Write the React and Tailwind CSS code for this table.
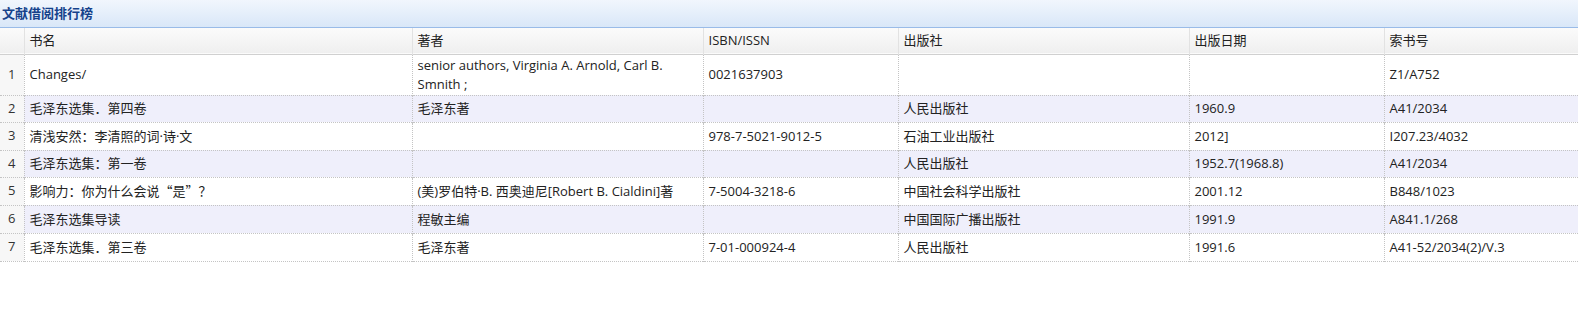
import React from 'react';

const columns = [
  { key: 'title', label: '书名', width: 'w-[388px]' },
  { key: 'author', label: '著者', width: 'w-[291px]' },
  { key: 'isbn', label: 'ISBN/ISSN', width: 'w-[195px]' },
  { key: 'publisher', label: '出版社', width: 'w-[291px]' },
  { key: 'date', label: '出版日期', width: 'w-[195px]' },
  { key: 'callno', label: '索书号', width: 'w-[194px]' },
];

const cjk = (s) => <span className="font-['Noto_Sans_CJK_SC',sans-serif]">{s}</span>;

const rows = [
  {
    title: 'Changes/',
    author: 'senior authors, Virginia A. Arnold, Carl B. Smnith ;',
    isbn: '0021637903',
    publisher: '',
    date: '',
    callno: 'Z1/A752',
  },
  { title: '毛泽东选集．第四卷', author: '毛泽东著', isbn: '', publisher: '人民出版社', date: '1960.9', callno: 'A41/2034' },
  { title: '清浅安然：李清照的词·诗·文', author: '', isbn: '978-7-5021-9012-5', publisher: '石油工业出版社', date: '2012]', callno: 'I207.23/4032' },
  { title: '毛泽东选集：第一卷', author: '', isbn: '', publisher: '人民出版社', date: '1952.7(1968.8)', callno: 'A41/2034' },
  { title: cjk('影响力：你为什么会说“是”？'), author: '(美)罗伯特·B. 西奥迪尼[Robert B. Cialdini]著', isbn: '7-5004-3218-6', publisher: '中国社会科学出版社', date: '2001.12', callno: 'B848/1023' },
  { title: '毛泽东选集导读', author: '程敏主编', isbn: '', publisher: '中国国际广播出版社', date: '1991.9', callno: 'A841.1/268' },
  { title: '毛泽东选集．第三卷', author: '毛泽东著', isbn: '7-01-000924-4', publisher: '人民出版社', date: '1991.6', callno: 'A41-52/2034(2)/V.3' },
];

const rowHeights = ['h-[41px]', 'h-[27px]', 'h-[28px]', 'h-[27px]', 'h-[28px]', 'h-[28px]', 'h-[28px]'];

export default function App() {
  return (
    <div className="w-[1578px] h-[334px] bg-white text-[13px] text-[#222] font-['Open_Sans','Noto_Sans_CJK_SC',sans-serif]">
      {/* panel title */}
      <div className="h-[28px] flex items-center px-[2px] border-b border-[#99bbe8] bg-gradient-to-b from-[#f1f6fd] to-[#d9e7f8]">
        <span className="font-bold text-[#15428b] text-[13px]">文献借阅排行榜</span>
      </div>

      <table className="table-fixed border-collapse w-full">
        <thead>
          <tr className="h-[26px] bg-gradient-to-b from-[#fbfbfb] to-[#efefef] border-b border-[#d0d0d0]">
            <th className="w-[24px] border-r border-[#e2e2e2]"></th>
            {columns.map((c) => (
              <th key={c.key} className={`${c.width} px-[5px] text-left font-normal text-[#222] border-r border-[#e2e2e2] last:border-r-0`}>
                {c.label}
              </th>
            ))}
          </tr>
        </thead>
        <tbody>
          {rows.map((r, i) => (
            <tr
              key={i}
              className={`${rowHeights[i]} ${i % 2 === 1 ? 'bg-[#efeffb]' : 'bg-white'} border-b border-dotted border-[#c4c4c4]`}
            >
              <td className="bg-[#f7f7f7] text-center text-[#333] border-r border-dotted border-[#c4c4c4]">{i + 1}</td>
              {columns.map((c) => (
                <td key={c.key} className="px-[5px] leading-[19px] align-middle border-r border-dotted border-[#c4c4c4] last:border-r-0">
                  {r[c.key]}
                </td>
              ))}
            </tr>
          ))}
        </tbody>
      </table>
    </div>
  );
}
